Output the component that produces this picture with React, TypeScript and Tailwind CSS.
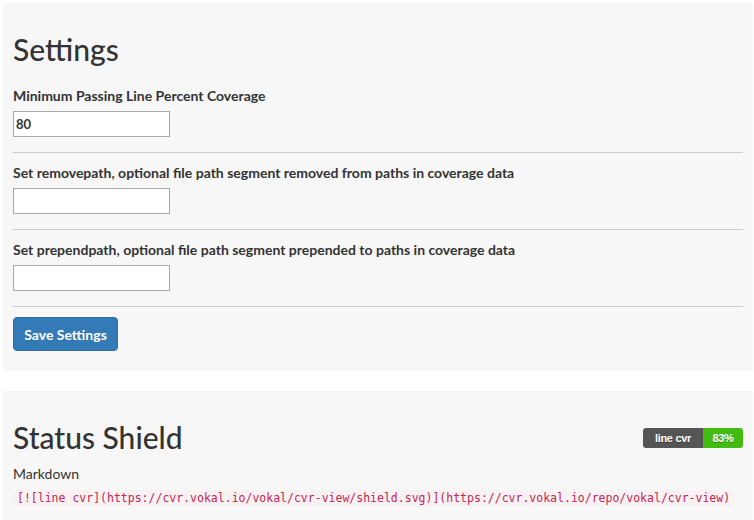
import React from 'react';

const fieldLabel = 'block text-[14px] leading-[20px] font-bold text-[#333] mb-[5px]';
const fieldInput =
  'block w-[157px] h-[26px] bg-white border border-[#a9a9a9] px-[2px] text-[13px] font-bold text-[#333] outline-none';

const Field: React.FC<{ label: string; value?: string }> = ({ label, value = '' }) => (
  <div>
    <label className={fieldLabel}>{label}</label>
    <input type="text" defaultValue={value} className={fieldInput} />
    <hr className="mt-[15px] mb-[10px] border-0 border-t border-[#cccccc]" />
  </div>
);

const Shield: React.FC = () => (
  <div
    className="flex h-[20px] rounded-[3px] overflow-hidden text-[11px] font-bold tracking-[-0.3px] text-white font-['Liberation_Sans',Arial,sans-serif]"
    style={{ textShadow: '0 1px 0 rgba(1,1,1,0.3)' }}
  >
    <span className="w-[60px] bg-[#555555] flex items-center justify-center">line cvr</span>
    <span className="w-[40px] bg-[#44bb11] flex items-center justify-center">83%</span>
  </div>
);

const App: React.FC = () => {
  return (
    <div className="bg-white min-h-[520px] pt-[3px] pl-[3px] pr-[1px] font-['Lato','Liberation_Sans',sans-serif] text-[#333]">
      <section className="bg-[#f7f7f7] px-[10px] pt-[30px] pb-[20px]">
        <h2 className="text-[30px] leading-[33px] font-medium mb-[20px]">Settings</h2>
        <form onSubmit={(e) => e.preventDefault()}>
          <Field label="Minimum Passing Line Percent Coverage" value="80" />
          <Field label="Set removepath, optional file path segment removed from paths in coverage data" />
          <Field label="Set prependpath, optional file path segment prepended to paths in coverage data" />
          <button
            type="submit"
            className="w-[105px] h-[34px] bg-[#337ab7] border border-[#2e6da4] rounded-[4px] text-white text-[14px] font-bold"
          >
            Save Settings
          </button>
        </form>
      </section>

      <section className="mt-[20px] bg-[#f7f7f7] px-[10px] pt-[30px] pb-[12px]">
        <div className="flex items-start justify-between">
          <h2 className="text-[30px] leading-[33px] font-medium">Status Shield</h2>
          <div className="mt-[7px]">
            <Shield />
          </div>
        </div>
        <div className="mt-[10px] text-[14px] leading-[20px]">Markdown</div>
        <div>
          <code className="inline-block mt-[2px] h-[17px] leading-[17px] px-[4px] rounded-[4px] bg-[#f9f2f4] text-[#c7254e] text-[11.5px] font-['DejaVu_Sans_Mono',monospace]">
            [![line cvr](https://cvr.vokal.io/vokal/cvr-view/shield.svg)](https://cvr.vokal.io/repo/vokal/cvr-view)
          </code>
        </div>
      </section>
    </div>
  );
};

export default App;
